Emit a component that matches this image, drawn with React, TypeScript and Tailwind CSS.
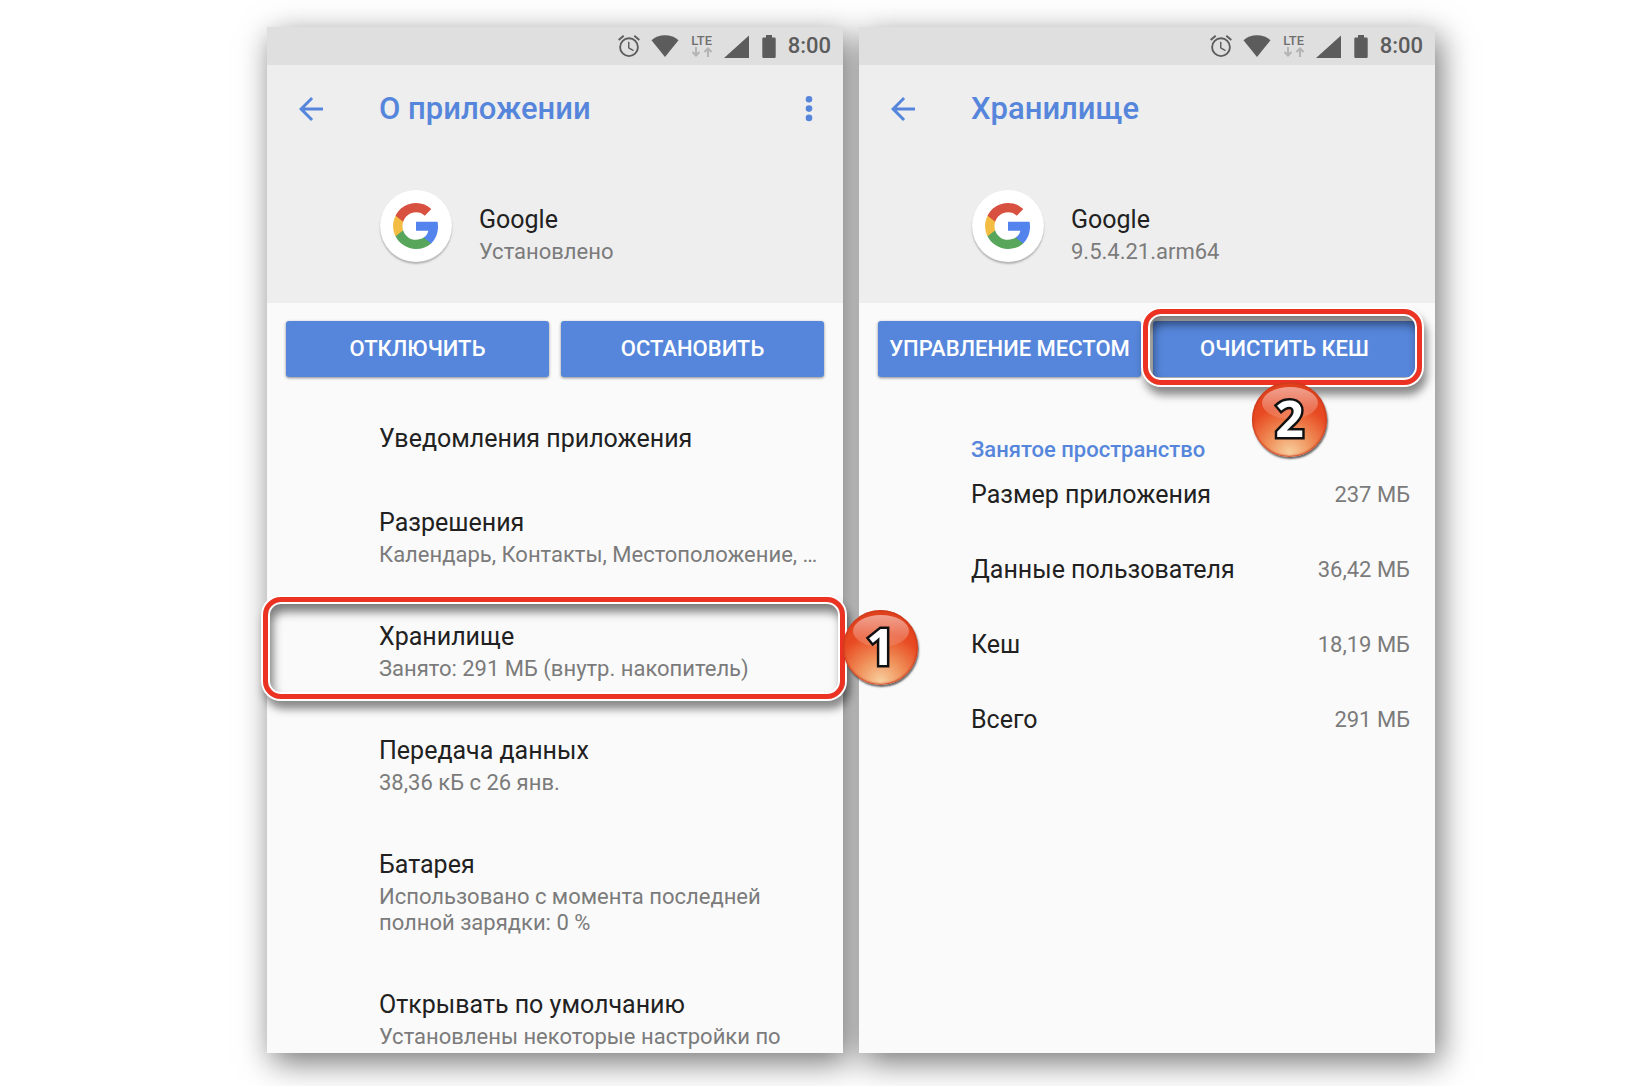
import React from 'react';

const settings = [
  { title: 'Уведомления приложения' },
  { title: 'Разрешения', note: 'Календарь, Контакты, Местоположение, …' },
  { title: 'Хранилище', note: 'Занято: 291 МБ (внутр. накопитель)', step: '1' },
  { title: 'Передача данных', note: '38,36 кБ с 26 янв.' },
  { title: 'Батарея', note: 'Использовано с момента последней полной зарядки: 0 %' },
  { title: 'Открывать по умолчанию', note: 'Установлены некоторые настройки по' },
];

const usage = [
  ['Размер приложения', '237 МБ'],
  ['Данные пользователя', '36,42 МБ'],
  ['Кеш', '18,19 МБ'],
  ['Всего', '291 МБ'],
];

const frame = 'pointer-events-none absolute rounded-[18px] border-[5px] border-[#ec3323] shadow-[0_0_0_2px_#fff,3px_8px_8px_2px_rgba(0,0,0,.45),inset_0_0_0_2px_#fff,inset_3px_8px_10px_2px_rgba(0,0,0,.5)]';

function StatusBar() {
  return (
    <div className="flex h-[38px] items-center justify-end bg-[#dfdfdf] pr-3 text-[#5c5c5c]">
      <svg className="mr-[11px] size-[22px]" viewBox="2 1.86 20 20.14" fill="currentColor"><path d="M22 5.72l-4.6-3.86-1.1 1.3 4.6 3.86L22 5.72zM7.7 3.16L6.6 1.86 2 5.71l1.1 1.3 4.6-3.85zM12.4 8H11.1v6l4.65 2.8.65-1.1-4-2.4V8zM12 4a9 9 0 100 18 9 9 0 000-18zm0 16.3a7.3 7.3 0 110-14.6 7.3 7.3 0 010 14.6z" /></svg>
      <svg className="mr-[11px] h-[22px] w-7" viewBox="0 0 28 22" fill="currentColor"><path d="M14 22L.5 5.200C4 2 9 .2 14 .2S24 2 27.500 5.200z" /></svg>
      <div className="mr-[10px] flex w-6 flex-col items-center">
        <span className="text-[13px] leading-3 font-medium text-[#707070]">LTE</span>
        <svg className="h-[10px] w-5" viewBox="0 0 20 10" fill="none" stroke="#b4b4b4" strokeWidth="2"><path d="M4 0v9M.5 5L4 8.500 7.500 5M16 10V1M12.500 5L16 1.500 19.500 5" /></svg>
      </div>
      <svg className="mr-[13px] size-[25px]" viewBox="0 0 25 25" fill="currentColor"><path d="M25 1.500V24H0z" /></svg>
      <svg className="mr-3 h-[23px] w-[14px]" viewBox="0 0 14 23" fill="currentColor"><path d="M4 0h6v2.500h2.500a1.200 1.200 0 011.200 1.200v18.100A1.200 1.200 0 0112.500 23h-11a1.200 1.200 0 01-1.200-1.200V3.700a1.200 1.200 0 011.200-1.200H4z" /></svg>
      <span className="text-[22px] leading-[26px] font-medium">8:00</span>
    </div>
  );
}

function Header({ title, note, menu }: { title: string; note: string; menu?: boolean }) {
  return (
    <header className="bg-[#eee]">
      <StatusBar />
      <div className="flex h-[88px] items-center pr-[30px] pl-8 text-[#5686db]">
        <button aria-label="Назад" className="mr-14 size-6">
          <svg className="size-6" viewBox="4 4 16 16" fill="currentColor"><path d="M20 11H7.830l5.590-5.590L12 4l-8 8 8 8 1.410-1.410L7.830 13H20v-2z" /></svg>
        </button>
        <h1 className="flex-1 text-[31px] leading-9 font-medium">{title}</h1>
        {menu && (
          <button aria-label="Меню">
            <svg className="h-7 w-2" viewBox="0 0 8 28" fill="currentColor"><circle cx="4" cy="4.300" r="3.300" /><circle cx="4" cy="13.600" r="3.300" /><circle cx="4" cy="22.900" r="3.300" /></svg>
          </button>
        )}
      </div>
      <div className="flex items-start pt-[37px] pb-[38px] pl-[113px]">
        <div className="mr-[27px] flex size-[72px] items-center justify-center rounded-full bg-white shadow-[0_2px_2px_rgba(0,0,0,.25)]">
          <svg className="size-[50px]" viewBox="0 0 24 24">
            <path fill="#5383ec" d="M22.560 12.250c0-.78-.07-1.530-.2-2.250H12v4.260h5.920c-.26 1.370-1.040 2.530-2.210 3.310v2.770h3.570c2.080-1.920 3.280-4.740 3.280-8.090z" />
            <path fill="#58a55c" d="M12 23c2.970 0 5.460-.98 7.280-2.660l-3.570-2.770c-.98.66-2.230 1.060-3.710 1.060-2.860 0-5.290-1.930-6.160-4.530H2.180v2.840C3.990 20.530 7.700 23 12 23z" />
            <path fill="#f2bd42" d="M5.840 14.090c-.22-.66-.35-1.360-.35-2.090s.13-1.430.35-2.090V7.070H2.180C1.430 8.550 1 10.220 1 12s.43 3.450 1.180 4.930l3.660-2.840z" />
            <path fill="#d85140" d="M12 5.380c1.620 0 3.060.56 4.210 1.640l3.150-3.150C17.450 2.090 14.970 1 12 1 7.700 1 3.990 3.470 2.180 7.070l3.660 2.840c.87-2.600 3.300-4.530 6.160-4.530z" />
          </svg>
        </div>
        <div className="mt-[15px]">
          <h2 className="text-[25px] leading-[30px] text-[#212121]">Google</h2>
          <p className="mt-1 text-[22px] leading-[26px] text-[#7b7b7b]">{note}</p>
        </div>
      </div>
    </header>
  );
}

function Action({ children }: { children: React.ReactNode }) {
  return <button className="h-14 w-full rounded-[3px] bg-[#5686db] text-[22px] leading-[26px] font-medium whitespace-nowrap text-white shadow-[0_1px_3px_rgba(0,0,0,.45)]">{children}</button>;
}

function Step({ children }: { children: React.ReactNode }) {
  return (
    <div className="flex size-[75px] items-center justify-center rounded-full bg-[radial-gradient(circle_at_50%_95%,#f8cf9f_0%,#f0935c_28%,#e84a22_60%,#dd3d1c_100%)] pb-1 shadow-[inset_0_0_2px_1px_#c8391c,1px_2px_2px_rgba(0,0,0,.6)]">
      <div className="absolute top-[5px] h-8 w-14 rounded-[50%] bg-linear-to-b from-white/50 to-white/10" />
      <span className="relative font-['Open_Sans','Noto_Sans',sans-serif] text-[50px] leading-[50px] font-bold text-white [-webkit-text-stroke:5px_#111] [paint-order:stroke_fill]">{children}</span>
    </div>
  );
}

const panel = "relative min-w-0 flex-1 bg-[#fafafa] before:absolute before:inset-0 before:-z-10 before:shadow-[5px_9px_30px_rgba(0,0,0,.55)] before:content-['']";

export default function App() {
  return (
    <main className="isolate flex min-h-screen gap-4 overflow-hidden bg-white pt-[27px] pr-[211px] pb-[33px] pl-[267px] font-['Roboto',sans-serif]">
      <section className={panel}>
        <Header title="О приложении" note="Установлено" menu />
        <div className="grid grid-cols-2 gap-3 px-[19px] pt-[18px] pb-5">
          <Action>ОТКЛЮЧИТЬ</Action>
          <Action>ОСТАНОВИТЬ</Action>
        </div>
        <ul className="pb-[3px]">
          {settings.map(s => (
            <li key={s.title} className="relative py-[27px] pr-6 pl-28 last:pb-0">
              <h3 className="text-[25px] leading-[30px] text-[#212121]">{s.title}</h3>
              {s.note && <p className="mt-1 text-[22px] leading-[26px] text-[#7b7b7b]">{s.note}</p>}
              {s.step && (
                <>
                  <div className={`${frame} top-0.5 -right-0.5 bottom-2.5 -left-1`} />
                  <div className="absolute top-[15px] -right-[75px] z-10 flex justify-center"><Step>{s.step}</Step></div>
                </>
              )}
            </li>
          ))}
        </ul>
      </section>
      <section className={panel}>
        <Header title="Хранилище" note="9.5.4.21.arm64" />
        <div className="grid grid-cols-2 gap-3 px-[19px] pt-[18px]">
          <Action>УПРАВЛЕНИЕ МЕСТОМ</Action>
          <div className="relative">
            <Action>ОЧИСТИТЬ КЕШ</Action>
            <div className={`${frame} -top-3 -right-1.5 -bottom-2 -left-2.5`} />
            <div className="absolute top-[61px] right-[89px] z-10 flex justify-center"><Step>2</Step></div>
          </div>
        </div>
        <h2 className="mt-[60px] pl-28 text-[22px] leading-[26px] font-medium text-[#5686db]">Занятое пространство</h2>
        <div className="pr-[25px] pl-28">
          <table className="-mt-1.5 w-full">
            <tbody>
              {usage.map(([name, size]) => (
                <tr key={name} className="h-[75px]">
                  <th scope="row" className="text-left text-[25px] leading-[30px] font-normal text-[#212121]">{name}</th>
                  <td className="text-right text-[22px] leading-[26px] text-[#7b7b7b]">{size}</td>
                </tr>
              ))}
            </tbody>
          </table>
        </div>
      </section>
    </main>
  );
}
